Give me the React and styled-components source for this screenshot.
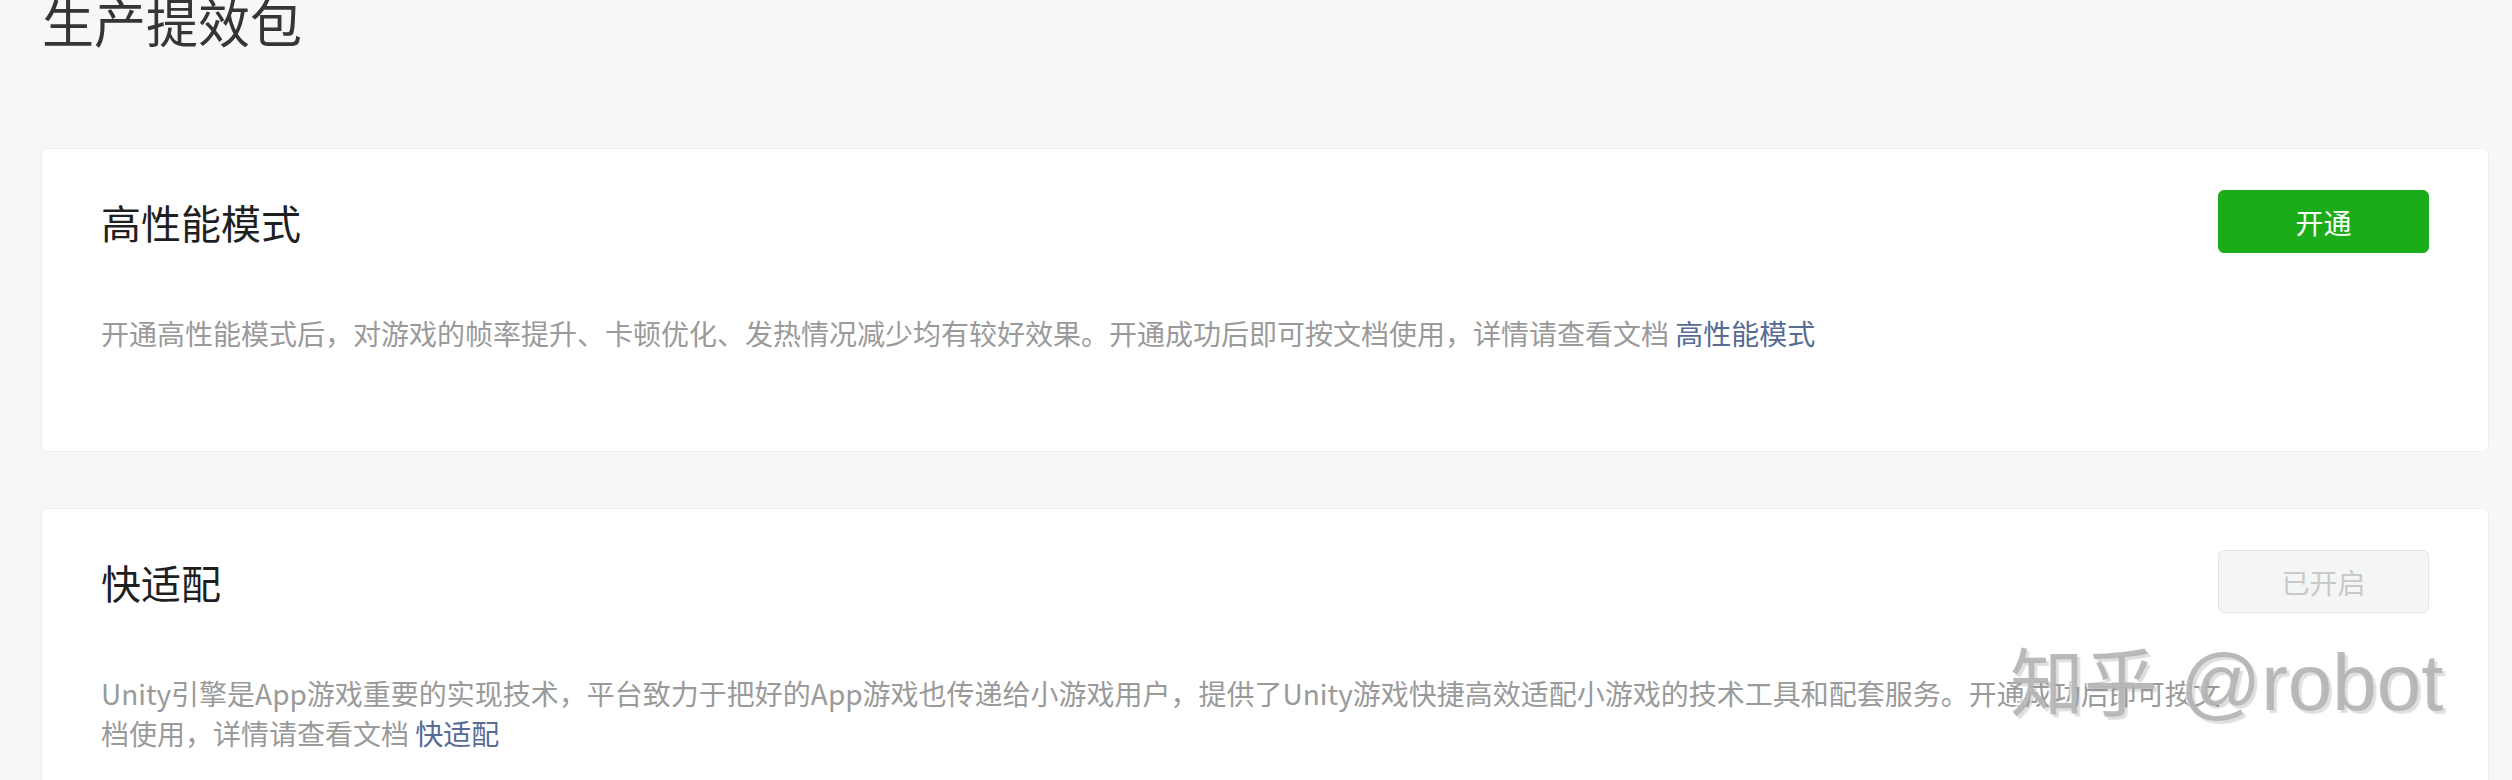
import React from "react";
import styled, { createGlobalStyle } from "styled-components";

const GlobalStyle = createGlobalStyle`
  html, body {
    margin: 0;
    padding: 0;
    background: #f6f7f9;
    font-family: "Noto Sans CJK SC", "Noto Sans", sans-serif;
    overflow: hidden;
  }
`;

const Page = styled.div`
  position: relative;
  width: 2512px;
  height: 780px;
  box-sizing: border-box;
  padding: 0 23px 0 41px;
  background: #f6f7f9;
  overflow: hidden;
`;

const PageTitle = styled.h1`
  margin: -5px 0 101px 1px;
  font-size: 52px;
  line-height: 52px;
  font-weight: 400;
  color: #353535;
`;

const CardList = styled.div`
  display: flex;
  flex-direction: column;
  gap: 56px;
`;

const Card = styled.section`
  display: flex;
  align-items: flex-start;
  background: #ffffff;
  border: 1px solid #edeef0;
  border-radius: 6px;
  padding: 41px 59px 98px;
  min-height: 304px;
  box-sizing: border-box;
`;

const Main = styled.div`
  flex: 1;
  min-width: 0;
`;

const CardTitle = styled.h2`
  margin: 0;
  height: 63px;
  display: flex;
  align-items: center;
  font-size: 40px;
  font-weight: 400;
  color: #1f1f1f;
`;

const Desc = styled.p`
  margin: 60px -10px 0 0;
  font-size: 28px;
  line-height: 40px;
  color: #9a9a9a;
`;

const DocLink = styled.a`
  color: #576b95;
  text-decoration: none;
  cursor: pointer;
`;

const ActionButton = styled.button`
  position: relative;
  flex: none;
  width: 211px;
  height: 63px;
  box-sizing: border-box;
  border-radius: 6px;
  font-family: inherit;
  font-size: 28px;
  cursor: ${(p) => (p.$disabled ? "default" : "pointer")};
  background: ${(p) => (p.$disabled ? "#f4f5f5" : "#1aad19")};
  color: ${(p) => (p.$disabled ? "#c9c9c9" : "#ffffff")};
  border: 1px solid ${(p) => (p.$disabled ? "#e3e4e4" : "#1aad19")};
`;

const Watermark = styled.div`
  position: absolute;
  left: 2010px;
  top: 624px;
  display: flex;
  align-items: baseline;
  gap: 22px;
  color: rgba(178, 178, 178, 0.9);
  text-shadow: 3px 3px 1px rgba(150, 150, 150, 0.3), -2px -2px 0 rgba(255, 255, 255, 0.6);
  pointer-events: none;
  white-space: nowrap;
`;

const WatermarkCJK = styled.span`
  font-family: "Noto Sans CJK SC", sans-serif;
  font-size: 74px;
  font-weight: 400;
`;

const WatermarkLatin = styled.span`
  font-family: "Liberation Sans", sans-serif;
  font-size: 80px;
  font-weight: 400;
`;

const features = [
  {
    title: "高性能模式",
    desc: "开通高性能模式后，对游戏的帧率提升、卡顿优化、发热情况减少均有较好效果。开通成功后即可按文档使用，详情请查看文档",
    link: "高性能模式",
    action: "开通",
    enabled: false,
  },
  {
    title: "快适配",
    desc: "Unity引擎是App游戏重要的实现技术，平台致力于把好的App游戏也传递给小游戏用户，提供了Unity游戏快捷高效适配小游戏的技术工具和配套服务。开通成功后即可按文档使用，详情请查看文档",
    link: "快适配",
    action: "已开启",
    enabled: true,
  },
];

export default function App() {
  return (
    <>
      <GlobalStyle />
      <Page>
        <PageTitle>生产提效包</PageTitle>
        <CardList>
          {features.map((f) => (
            <Card key={f.title}>
              <Main>
                <CardTitle>{f.title}</CardTitle>
                <Desc>
                  {f.desc} <DocLink>{f.link}</DocLink>
                </Desc>
              </Main>
              <ActionButton $disabled={f.enabled}>{f.action}</ActionButton>
            </Card>
          ))}
        </CardList>
        <Watermark>
          <WatermarkCJK>知乎</WatermarkCJK>
          <WatermarkLatin>@robot</WatermarkLatin>
        </Watermark>
      </Page>
    </>
  );
}
